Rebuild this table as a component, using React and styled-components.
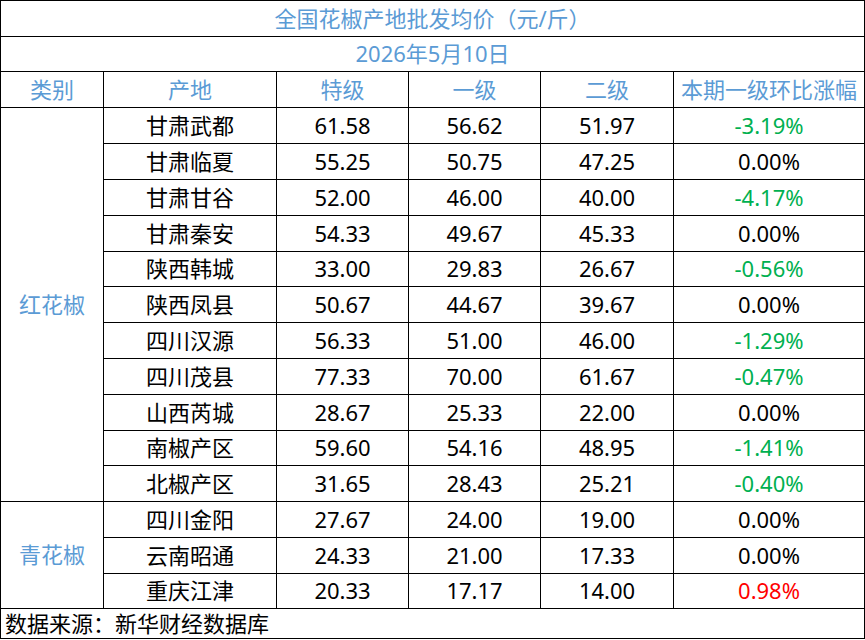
import React from 'react';
import styled, { createGlobalStyle } from 'styled-components';

const GlobalStyle = createGlobalStyle`
  html, body {
    margin: 0;
    padding: 0;
    background: #fff;
  }
  body {
    font-family: "Noto Sans", "Noto Sans CJK SC", sans-serif;
  }
`;

const Table = styled.table`
  border-collapse: collapse;
  table-layout: fixed;
  width: 864px;
  margin: 0;
  font-size: 22px;
  color: #000;
`;

const Row = styled.tr`
  height: ${(props) => props.h || 36}px;
`;

const Cell = styled.td`
  border: 1px solid #000;
  padding: 0 0 2px 0;
  text-align: ${(props) => props.align || 'center'};
  vertical-align: middle;
  line-height: 1;
  white-space: nowrap;
  color: ${(props) => props.color || '#000'};
  padding-left: ${(props) => (props.align === 'left' ? '4px' : '0')};
`;

const BLUE = '#5b9bd5';
const GREEN = '#00b050';
const RED = '#ff0000';

const red = [
  ['甘肃武都', '61.58', '56.62', '51.97', '-3.19%'],
  ['甘肃临夏', '55.25', '50.75', '47.25', '0.00%'],
  ['甘肃甘谷', '52.00', '46.00', '40.00', '-4.17%'],
  ['甘肃秦安', '54.33', '49.67', '45.33', '0.00%'],
  ['陕西韩城', '33.00', '29.83', '26.67', '-0.56%'],
  ['陕西凤县', '50.67', '44.67', '39.67', '0.00%'],
  ['四川汉源', '56.33', '51.00', '46.00', '-1.29%'],
  ['四川茂县', '77.33', '70.00', '61.67', '-0.47%'],
  ['山西芮城', '28.67', '25.33', '22.00', '0.00%'],
  ['南椒产区', '59.60', '54.16', '48.95', '-1.41%'],
  ['北椒产区', '31.65', '28.43', '25.21', '-0.40%'],
];

const green = [
  ['四川金阳', '27.67', '24.00', '19.00', '0.00%'],
  ['云南昭通', '24.33', '21.00', '17.33', '0.00%'],
  ['重庆江津', '20.33', '17.17', '14.00', '0.98%'],
];

const changeColor = (v) => {
  if (v.startsWith('-')) return GREEN;
  if (v === '0.00%') return '#000';
  return RED;
};

const heights = [36, 36, 36, 36, 35, 36, 36, 36, 36, 35, 36, 36, 36, 35];

const DataRow = ({ item, first, label, span, h }) => (
  <Row h={h}>
    {first && (
      <Cell rowSpan={span} color={BLUE}>
        {label}
      </Cell>
    )}
    <Cell>{item[0]}</Cell>
    <Cell>{item[1]}</Cell>
    <Cell>{item[2]}</Cell>
    <Cell>{item[3]}</Cell>
    <Cell color={changeColor(item[4])}>{item[4]}</Cell>
  </Row>
);

const App = () => (
  <>
    <GlobalStyle />
    <Table>
      <colgroup>
        <col style={{ width: 103 }} />
        <col style={{ width: 173 }} />
        <col style={{ width: 132 }} />
        <col style={{ width: 132 }} />
        <col style={{ width: 133 }} />
        <col style={{ width: 191 }} />
      </colgroup>
      <tbody>
        <Row h={36}>
          <Cell colSpan={6} color={BLUE}>
            全国花椒产地批发均价（元/斤）
          </Cell>
        </Row>
        <Row h={35}>
          <Cell colSpan={6} color={BLUE}>
            2026年5月10日
          </Cell>
        </Row>
        <Row h={36}>
          <Cell color={BLUE}>类别</Cell>
          <Cell color={BLUE}>产地</Cell>
          <Cell color={BLUE}>特级</Cell>
          <Cell color={BLUE}>一级</Cell>
          <Cell color={BLUE}>二级</Cell>
          <Cell color={BLUE}>本期一级环比涨幅</Cell>
        </Row>
        {red.map((item, i) => (
          <DataRow
            key={item[0]}
            item={item}
            first={i === 0}
            label="红花椒"
            span={red.length}
            h={heights[i]}
          />
        ))}
        {green.map((item, i) => (
          <DataRow
            key={item[0]}
            item={item}
            first={i === 0}
            label="青花椒"
            span={green.length}
            h={heights[11 + i]}
          />
        ))}
        <Row h={30}>
          <Cell colSpan={6} align="left">
            数据来源：新华财经数据库
          </Cell>
        </Row>
      </tbody>
    </Table>
  </>
);

export default App;
